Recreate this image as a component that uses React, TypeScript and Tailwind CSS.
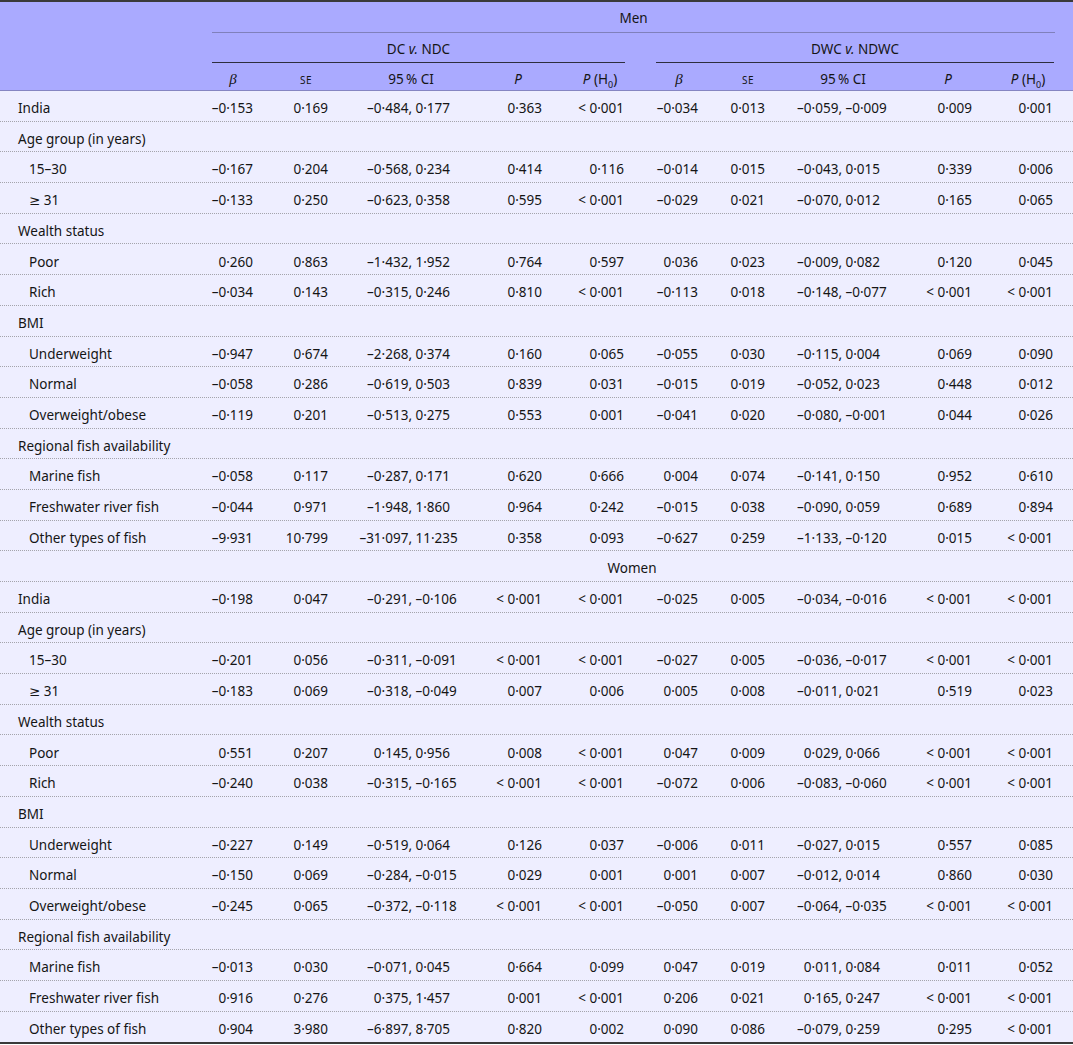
const cols =
  "grid grid-cols-[205px_56px_90px_120px_94px_70px_88px_50px_140px_70px_90px]";

type Row =
  | { kind: "data"; label: string; sub?: boolean; v: string[] }
  | { kind: "head"; label: string }
  | { kind: "group"; label: string };

// values typed with "-" and "." and shown with en dash and middle dot
const fmt = (s: string) => s.replace(/-/g, "\u2013").replace(/\./g, "\u00b7");

const rows: Row[] = [
  { kind: "data", label: "India", v: ["-0.153", "0.169", "-0.484, 0.177", "0.363", "< 0.001", "-0.034", "0.013", "-0.059, -0.009", "0.009", "0.001"] },
  { kind: "head", label: "Age group (in years)" },
  { kind: "data", sub: true, label: "15\u201330", v: ["-0.167", "0.204", "-0.568, 0.234", "0.414", "0.116", "-0.014", "0.015", "-0.043, 0.015", "0.339", "0.006"] },
  { kind: "data", sub: true, label: "\u2265 31", v: ["-0.133", "0.250", "-0.623, 0.358", "0.595", "< 0.001", "-0.029", "0.021", "-0.070, 0.012", "0.165", "0.065"] },
  { kind: "head", label: "Wealth status" },
  { kind: "data", sub: true, label: "Poor", v: ["0.260", "0.863", "-1.432, 1.952", "0.764", "0.597", "0.036", "0.023", "-0.009, 0.082", "0.120", "0.045"] },
  { kind: "data", sub: true, label: "Rich", v: ["-0.034", "0.143", "-0.315, 0.246", "0.810", "< 0.001", "-0.113", "0.018", "-0.148, -0.077", "< 0.001", "< 0.001"] },
  { kind: "head", label: "BMI" },
  { kind: "data", sub: true, label: "Underweight", v: ["-0.947", "0.674", "-2.268, 0.374", "0.160", "0.065", "-0.055", "0.030", "-0.115, 0.004", "0.069", "0.090"] },
  { kind: "data", sub: true, label: "Normal", v: ["-0.058", "0.286", "-0.619, 0.503", "0.839", "0.031", "-0.015", "0.019", "-0.052, 0.023", "0.448", "0.012"] },
  { kind: "data", sub: true, label: "Overweight/obese", v: ["-0.119", "0.201", "-0.513, 0.275", "0.553", "0.001", "-0.041", "0.020", "-0.080, -0.001", "0.044", "0.026"] },
  { kind: "head", label: "Regional fish availability" },
  { kind: "data", sub: true, label: "Marine fish", v: ["-0.058", "0.117", "-0.287, 0.171", "0.620", "0.666", "0.004", "0.074", "-0.141, 0.150", "0.952", "0.610"] },
  { kind: "data", sub: true, label: "Freshwater river fish", v: ["-0.044", "0.971", "-1.948, 1.860", "0.964", "0.242", "-0.015", "0.038", "-0.090, 0.059", "0.689", "0.894"] },
  { kind: "data", sub: true, label: "Other types of fish", v: ["-9.931", "10.799", "-31.097, 11.235", "0.358", "0.093", "-0.627", "0.259", "-1.133, -0.120", "0.015", "< 0.001"] },
  { kind: "group", label: "Women" },
  { kind: "data", label: "India", v: ["-0.198", "0.047", "-0.291, -0.106", "< 0.001", "< 0.001", "-0.025", "0.005", "-0.034, -0.016", "< 0.001", "< 0.001"] },
  { kind: "head", label: "Age group (in years)" },
  { kind: "data", sub: true, label: "15\u201330", v: ["-0.201", "0.056", "-0.311, -0.091", "< 0.001", "< 0.001", "-0.027", "0.005", "-0.036, -0.017", "< 0.001", "< 0.001"] },
  { kind: "data", sub: true, label: "\u2265 31", v: ["-0.183", "0.069", "-0.318, -0.049", "0.007", "0.006", "0.005", "0.008", "-0.011, 0.021", "0.519", "0.023"] },
  { kind: "head", label: "Wealth status" },
  { kind: "data", sub: true, label: "Poor", v: ["0.551", "0.207", "0.145, 0.956", "0.008", "< 0.001", "0.047", "0.009", "0.029, 0.066", "< 0.001", "< 0.001"] },
  { kind: "data", sub: true, label: "Rich", v: ["-0.240", "0.038", "-0.315, -0.165", "< 0.001", "< 0.001", "-0.072", "0.006", "-0.083, -0.060", "< 0.001", "< 0.001"] },
  { kind: "head", label: "BMI" },
  { kind: "data", sub: true, label: "Underweight", v: ["-0.227", "0.149", "-0.519, 0.064", "0.126", "0.037", "-0.006", "0.011", "-0.027, 0.015", "0.557", "0.085"] },
  { kind: "data", sub: true, label: "Normal", v: ["-0.150", "0.069", "-0.284, -0.015", "0.029", "0.001", "0.001", "0.007", "-0.012, 0.014", "0.860", "0.030"] },
  { kind: "data", sub: true, label: "Overweight/obese", v: ["-0.245", "0.065", "-0.372, -0.118", "< 0.001", "< 0.001", "-0.050", "0.007", "-0.064, -0.035", "< 0.001", "< 0.001"] },
  { kind: "head", label: "Regional fish availability" },
  { kind: "data", sub: true, label: "Marine fish", v: ["-0.013", "0.030", "-0.071, 0.045", "0.664", "0.099", "0.047", "0.019", "0.011, 0.084", "0.011", "0.052"] },
  { kind: "data", sub: true, label: "Freshwater river fish", v: ["0.916", "0.276", "0.375, 1.457", "0.001", "< 0.001", "0.206", "0.021", "0.165, 0.247", "< 0.001", "< 0.001"] },
  { kind: "data", sub: true, label: "Other types of fish", v: ["0.904", "3.980", "-6.897, 8.705", "0.820", "0.002", "0.090", "0.086", "-0.079, 0.259", "0.295", "< 0.001"] },
];

// right padding per plain numeric column (index into v)
const pad: Record<number, string> = {
  0: "pr-[8px]",
  1: "pr-[23px]",
  3: "pr-[23px]",
  4: "pr-[11px]",
  5: "pr-[25px]",
  6: "pr-[8px]",
  8: "pr-[11px]",
  9: "pr-[20px]",
};

const Ci = ({ text, left }: { text: string; left: string }) => {
  const [a, b] = fmt(text).split(", ");
  return (
    <div className="flex whitespace-nowrap">
      <span className={`${left} text-right`}>{a},</span>
      <span className="pl-[3.5px]">{b}</span>
    </div>
  );
};

const P = () => <span className="italic">P</span>;
const PH0 = () => (
  <span className="whitespace-nowrap">
    <P /> (H<sub className="text-[9px] align-[-2px]">0</sub>)
  </span>
);
const Beta = () => (
  <span className="italic font-['Liberation_Serif',serif] text-[15px]">β</span>
);
const Se = () => <span className="text-[10px] tracking-[0.5px]">SE</span>;
const Ci95 = () => <span>95&#8201;% CI</span>;

const Head = () => (
  <div className="bg-[#aaaaff] border-t-2 border-[#3a3a3a] border-b border-b-[#8585c2]">
    <div className="flex h-[31px]">
      <div className="w-[205px]" />
      <div className="flex-1 flex">
        <div className="flex-1 ml-[7px] mr-[18px] pt-[4px] border-b border-[#8080bb] flex items-center justify-center">
          Men
        </div>
      </div>
    </div>
    <div className="flex h-[30px]">
      <div className="w-[205px]" />
      <div className="w-[430px] flex">
        <div className="flex-1 ml-[7px] mr-[10px] pt-[5px] border-b-[1.5px] border-[#2e2e3e] flex items-center justify-center">
          <span>
            DC <span className="italic">v.</span> NDC
          </span>
        </div>
      </div>
      <div className="w-[438px] flex">
        <div className="flex-1 ml-[21px] mr-[19px] pt-[5px] border-b-[1.5px] border-[#2e2e3e] flex items-center justify-center">
          <span>
            DWC <span className="italic">v.</span> NDWC
          </span>
        </div>
      </div>
    </div>
    <div className={`${cols} h-[27px] pt-[6px] items-center text-center`}>
      <div />
      <Beta />
      <Se />
      <Ci95 />
      <P />
      <PH0 />
      <Beta />
      <Se />
      <Ci95 />
      <P />
      <PH0 />
    </div>
  </div>
);

export default function App() {
  return (
    <div className="w-[1073px] h-[1045px] bg-white font-['Noto_Sans','DejaVu_Sans',sans-serif] text-[13.5px] text-[#151515] leading-none">
      <Head />
      <div className="bg-[#eeeeff] border-b-2 border-[#3a3a3a]">
        {rows.map((r, i) => {
          const line = i < rows.length - 1 ? "border-b border-dotted border-[#a4a4ac]" : "";
          if (r.kind === "head") {
            return (
              <div key={i} className={`h-[30.7px] pt-[6px] flex items-center pl-[18px] ${line}`}>
                {r.label}
              </div>
            );
          }
          if (r.kind === "group") {
            return (
              <div key={i} className={`h-[30.7px] pt-[6px] flex items-center ${line}`}>
                <div className="w-[205px]" />
                <div className="flex-1 flex justify-center pr-[14px]">{r.label}</div>
              </div>
            );
          }
          return (
            <div key={i} className={`${cols} h-[30.7px] pt-[6px] items-center ${line}`}>
              <div className={r.sub ? "pl-[29px]" : "pl-[18px]"}>{r.label}</div>
              {r.v.map((val, j) =>
                j === 2 ? (
                  <Ci key={j} text={val} left="w-[61px]" />
                ) : j === 7 ? (
                  <Ci key={j} text={val} left="w-[69px]" />
                ) : (
                  <div key={j} className={`text-right whitespace-nowrap ${pad[j]}`}>
                    {fmt(val)}
                  </div>
                )
              )}
            </div>
          );
        })}
      </div>
    </div>
  );
}
